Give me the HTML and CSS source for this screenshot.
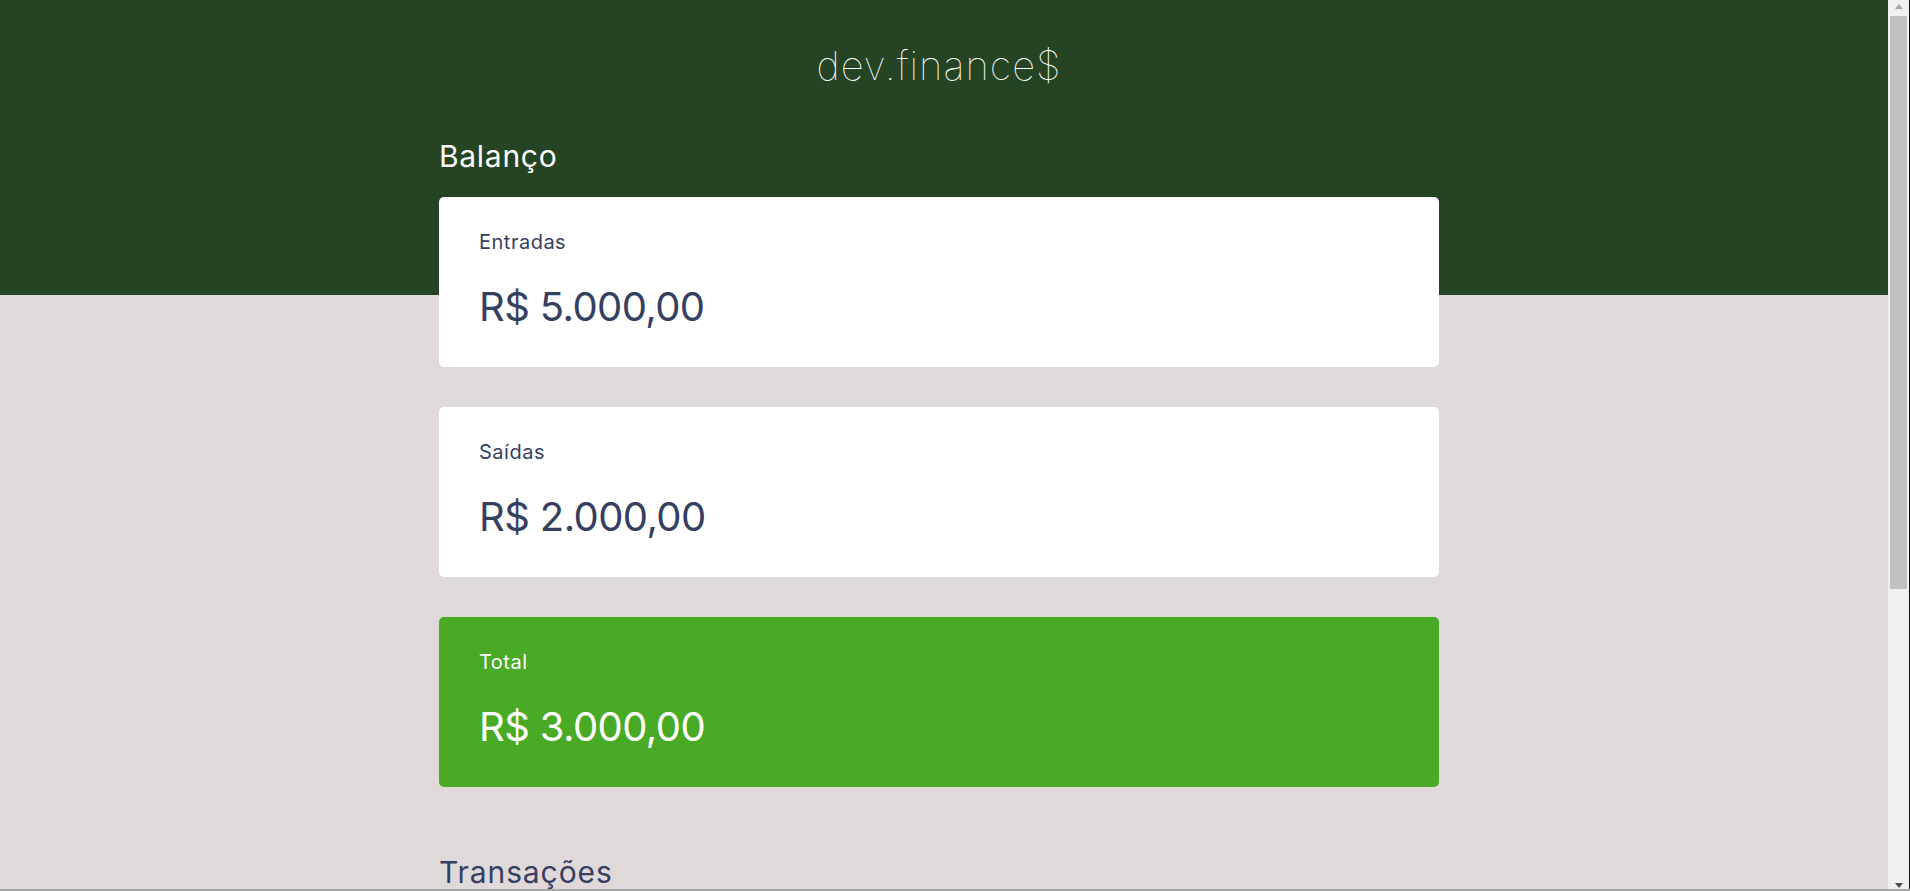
FILE: index.html
```html
<!DOCTYPE html>
<html lang="pt-BR">
<head>
<meta charset="utf-8">
<title>dev.finance$</title>
<link rel="stylesheet" href="styles.css">
</head>
<body>
<div class="viewport">
  <header class="header">
    <h1 class="logo">dev.finance$</h1>
  </header>
  <main class="content">
    <div class="container">
      <section class="balance">
        <h2 class="balance-title">Balanço</h2>
        <div class="card">
          <h3 class="card-label">Entradas</h3>
          <p class="card-value">R$ 5.000,00</p>
        </div>
        <div class="card">
          <h3 class="card-label">Saídas</h3>
          <p class="card-value">R$ 2.000,00</p>
        </div>
        <div class="card card-total">
          <h3 class="card-label">Total</h3>
          <p class="card-value">R$ 3.000,00</p>
        </div>
      </section>
      <section class="transactions">
        <h2 class="section-title">Transações</h2>
        <a class="new-link" href="#">+ Nova Transação</a>
        <table class="data-table">
          <thead>
            <tr><th>Descrição</th><th>Valor</th><th>Data</th></tr>
          </thead>
          <tbody>
            <tr><td>Luz</td><td class="expense">- R$ 500,00</td><td>23/01/2021</td></tr>
            <tr><td>Criação website</td><td class="income">R$ 5.000,00</td><td>23/01/2021</td></tr>
            <tr><td>Internet</td><td class="expense">- R$ 200,00</td><td>23/01/2021</td></tr>
          </tbody>
        </table>
      </section>
    </div>
    <footer class="footer">dev.finance$</footer>
  </main>
</div>
<div class="scrollbar" aria-hidden="true">
  <span class="scroll-arrow scroll-arrow-up"></span>
  <span class="scroll-thumb"></span>
  <span class="scroll-arrow scroll-arrow-down"></span>
</div>
</body>
</html>
```
FILE: styles.css
```css
html, body {
  margin: 0;
  padding: 0;
}

body {
  box-sizing: border-box;
  height: 100vh;
  display: flex;
  overflow: hidden;
  background: #dfd9d9;
  border-bottom: 2px solid #a7a7a7;
  font-family: "Inter", "Noto Sans", sans-serif;
  color: #363f5f;
}

.viewport {
  flex: 1;
  min-width: 0;
  overflow: hidden;
}

/* scrollbar column drawn like the browser's */
.scrollbar {
  width: 21px;
  flex: 0 0 21px;
  background: #f0f0f0;
  border-right: 1px solid #111111;
  display: flex;
  flex-direction: column;
  align-items: center;
}

.scroll-arrow {
  width: 0;
  height: 0;
  border-left: 4.5px solid transparent;
  border-right: 4.5px solid transparent;
}

.scroll-arrow-up {
  margin-top: 4px;
  border-bottom: 5px solid #a0aaa3;
}

.scroll-thumb {
  width: 17px;
  height: 573px;
  margin-top: 7px;
  background: #c1c1c1;
}

.scroll-arrow-down {
  margin-top: auto;
  margin-bottom: 1px;
  border-top: 5px solid #4f4a52;
}

.header {
  background: #244424;
  padding: 36px 10px 199px 0;
  text-align: center;
}

.logo {
  margin: 0;
  font-size: 40px;
  line-height: 60px;
  font-weight: 100;
  letter-spacing: 1px;
  color: #ffffff;
}

.content {
  padding-right: 10px;
}

.container {
  width: 1000px;
  margin: -161px auto 0;
}

.balance-title {
  margin: 0 0 18px;
  font-size: 30px;
  line-height: 45px;
  font-weight: 400;
  letter-spacing: 0.7px;
  color: #ffffff;
}

.card {
  background: #ffffff;
  border-radius: 5px;
  padding: 30px 40px;
  margin-bottom: 40px;
  color: #363f5f;
}

.card-label {
  margin: 0;
  font-size: 20px;
  line-height: 30px;
  font-weight: 400;
  letter-spacing: 0.5px;
}

.card-value {
  margin: 20px 0 0;
  font-size: 40px;
  line-height: 60px;
  letter-spacing: -0.6px;
}

.card-total {
  background: #49aa26;
  color: #ffffff;
}

.section-title {
  margin: 63px 0 16px;
  font-size: 30px;
  line-height: 45px;
  font-weight: 400;
  letter-spacing: 0.9px;
  color: #363f5f;
}

.new-link {
  display: block;
  width: max-content;
  margin-bottom: 20px;
  line-height: 30px;
  color: #49aa26;
  font-size: 20px;
  text-decoration: none;
}

.data-table {
  width: 100%;
  border-spacing: 0 10px;
  color: #969cb3;
  font-size: 20px;
  line-height: 24px;
}

.data-table th {
  background: #ffffff;
  text-align: left;
  font-weight: 400;
  padding: 16px 40px;
}

.data-table td {
  background: #ffffff;
  padding: 16px 40px;
}

.data-table .income { color: #12a454; }
.data-table .expense { color: #e92929; }

.footer {
  text-align: center;
  padding: 30px 0;
  line-height: 30px;
  color: #363f5f;
  opacity: 0.6;
  font-size: 20px;
}
```
